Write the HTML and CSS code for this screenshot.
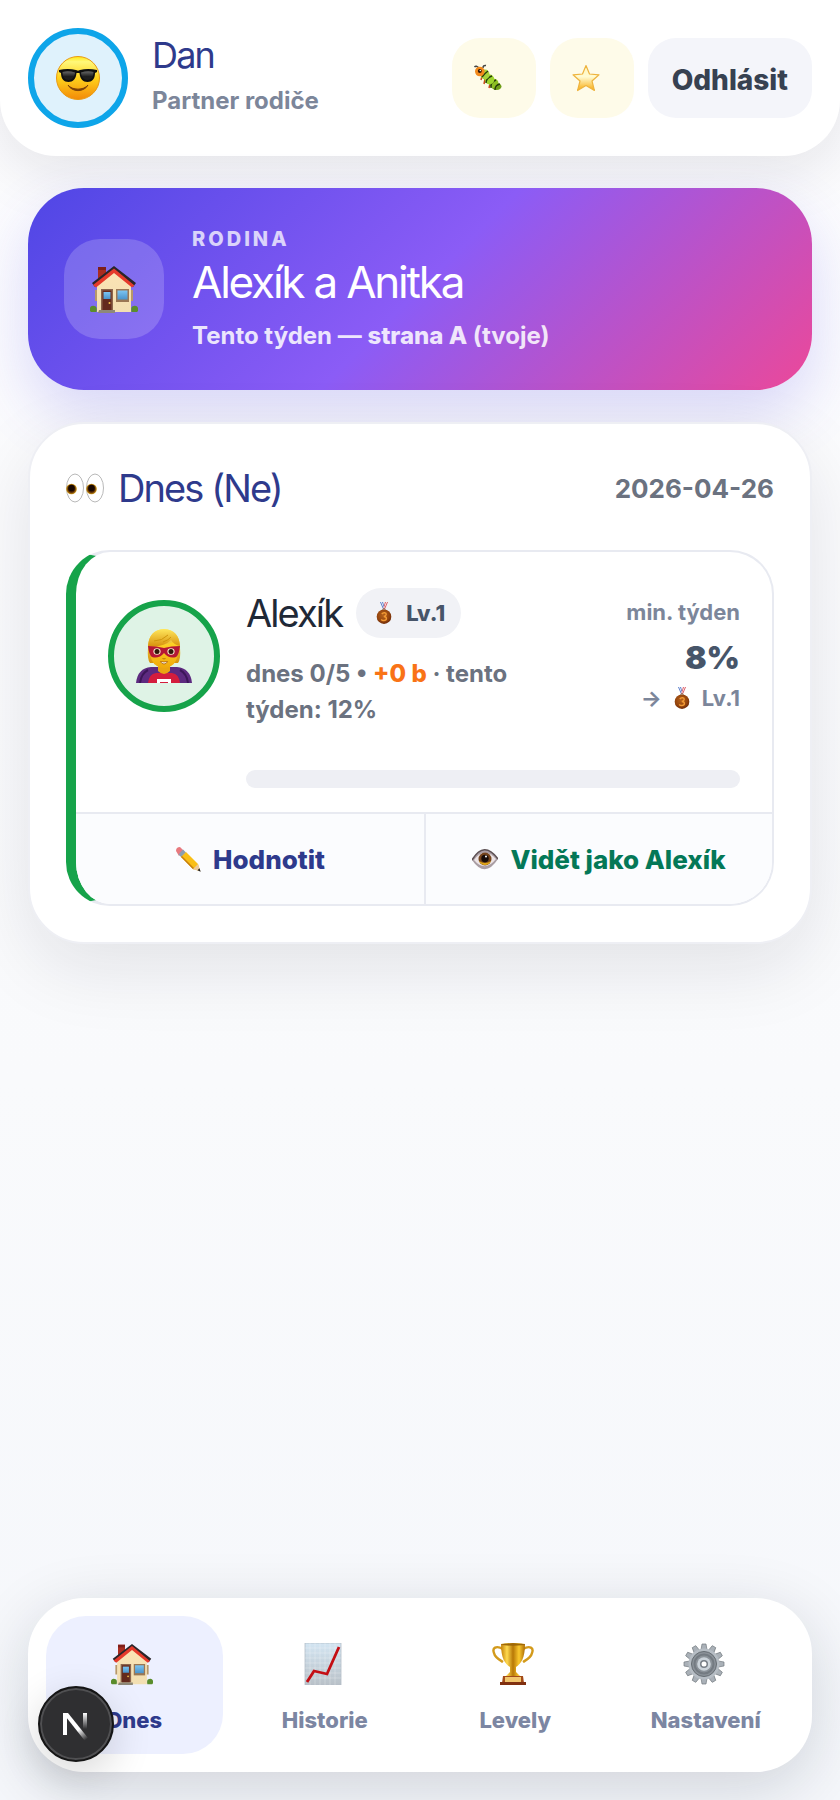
FILE: index.html
```html
<!DOCTYPE html>
<html lang="cs">
<head>
    <meta charset="UTF-8">
    <meta name="viewport" content="width=device-width, initial-scale=1.0">
    <title>Alexík a Anitka</title>
    <link rel="stylesheet" href="styles.css">
</head>
<body>
    <!-- shared icons -->
    <svg class="sprite" aria-hidden="true">
        <defs>
            <linearGradient id="g-wall" x1="0" y1="0" x2="0" y2="1"><stop offset="0" stop-color="#fbe3b4"/><stop offset="1" stop-color="#f2dfb2"/></linearGradient>
            <linearGradient id="g-glass" x1="0" y1="0" x2="0" y2="1"><stop offset="0" stop-color="#7cc5f2"/><stop offset="1" stop-color="#4a93cb"/></linearGradient>
            <radialGradient id="g-bronze" cx=".45" cy=".4" r=".6"><stop offset="0" stop-color="#b5621c"/><stop offset=".7" stop-color="#94440d"/><stop offset="1" stop-color="#6f2b08"/></radialGradient>
            <symbol id="i-house" viewBox="0 0 48 48">
                <path d="M8 2h8v14H8z" fill="#a92c20"/><path d="M8 2h8v3H8z" fill="#7e1f1a"/>
                <path d="M7 20 24 6l17 14v27H7z" fill="url(#g-wall)"/>
                <path d="M5 25h2v11H5zM41 25h2v11h-2z" fill="#b7986a"/>
                <path d="M24 1 2 18l3 4L24 6l19 16 3-4z" fill="#2a2529"/>
                <path d="M24 3.500 3 20l3 2.500L24 8l18 14.500 2.500-2z" fill="#e53a2b"/>
                <path d="M11 24h12v21H11z" fill="#8b654c"/><path d="M12.500 25.500h9V45h-9z" fill="#642a1d"/>
                <path d="M13.500 27h7v7h-7z" fill="url(#g-glass)"/><circle cx="19.500" cy="38" r="1" fill="#f4c54d"/>
                <path d="M26 24h13v13H26z" fill="#9a7754"/><path d="M27.500 25.500h10v9h-10z" fill="url(#g-glass)"/>
                <path d="M0 46c-1-4 2-6 4-5 3 0 3 3 2.500 6H1zM48 46c1-4-2-6-4-5-3 0-3 3-2.500 6h5.500z" fill="#5a8d2c"/>
                <path d="M9 45h16v3H8z" fill="#8e8878"/>
            </symbol>
            <symbol id="i-medal" viewBox="0 0 16 22">
                <path d="M4 0h3l2 7H7z" fill="#5579c9"/><path d="M12 0H9L7 7h2z" fill="#d95762"/>
                <path d="M5 0h1l2 6h-.5zM11 0h-1L8 6h.5z" fill="#fff"/>
                <circle cx="8" cy="8" r="1.300" fill="none" stroke="#8c7b6e"/>
                <circle cx="8" cy="14.700" r="7.300" fill="url(#g-bronze)"/>
                <path d="M5.800 12q1-1.400 2.800-1.200c2.300.300 2.300 3-.8 3.700 3.600.2 3.400 4-.1 4-1.100 0-2-.500-2.400-1.200" fill="none" stroke="#f29a35" stroke-width="1.400"/>
            </symbol>
        </defs>
    </svg>

    <header class="topbar">
        <div class="avatar avatar-me">
            <svg class="face" viewBox="0 0 44 44" aria-hidden="true">
                <defs><linearGradient id="g-face" x1="0" y1="0" x2="0" y2="1"><stop offset="0" stop-color="#ffe80f"/><stop offset=".12" stop-color="#fff87a"/><stop offset=".5" stop-color="#ffd21c"/><stop offset="1" stop-color="#f38a08"/></linearGradient>
                <linearGradient id="g-lens" x1="0" y1="0" x2="0" y2="1"><stop offset="0" stop-color="#666"/><stop offset=".6" stop-color="#1d1d1d"/></linearGradient></defs>
                <circle cx="22" cy="22" r="21.500" fill="url(#g-face)" stroke="#e99a13"/>
                <path d="M3 14q9-2 17 0l2 .8 2-.8q8-2 17 0v2l-2 1c0 6-3 9-7.500 9S24 23 23.500 17h-3C20 23 17 26 12.500 26S5 23 5 17l-2-1z" fill="#101010"/>
                <path d="M6.500 16q6-1.500 12.500.5c0 4-3 7.500-6.500 7.500s-6-3-6-8zM37.500 16q-6-1.500-12.500.5c0 4 3 7.500 6.500 7.500s6-3 6-8z" fill="url(#g-lens)"/>
                <path d="M12 29c4 5.500 16 5.500 20 0-4 7.500-16 7.500-20 0z" fill="#7c4108" stroke="#7c4108" stroke-linejoin="round"/>
            </svg>
        </div>
        <div class="user">
            <h1>Dan</h1>
            <p>Partner rodiče</p>
        </div>
        <div class="topbar-actions">
            <button class="icon-btn" type="button" aria-label="Housenka">
                <svg viewBox="0 0 28 28" aria-hidden="true">
                    <path d="M5 4Q2 1 .5 3M9 4q0-3 3-2.500" fill="none" stroke="#444" stroke-width="1.500"/>
                    <path d="M8 12l-1 4M11 15l-1 5M16 20l-1 4" stroke="#c8471b" stroke-width="1.500"/>
                    <ellipse cx="22.500" cy="22.500" rx="5" ry="3.500" fill="#6f9e18"/><ellipse cx="20" cy="19.500" rx="4.500" ry="4.800" fill="#8cbf24"/>
                    <path d="M17 24q-1-6 5-8M21 26q0-5 5-6" fill="none" stroke="#263a0c" stroke-width="1.400"/>
                    <ellipse cx="15.500" cy="15.500" rx="4.800" ry="5" fill="#9ed42f"/><path d="M12 19q0-5 6-7" fill="none" stroke="#263a0c" stroke-width="1.400"/>
                    <ellipse cx="11" cy="10.500" rx="4.500" ry="5" fill="#a4d43a"/><path d="M8 13q2-3 6-6" fill="none" stroke="#263a0c" stroke-width="1.400"/>
                    <circle cx="5.800" cy="7.500" r="4.800" fill="#f38a1c"/><circle cx="5.800" cy="7" r="2" fill="#301707"/><circle cx="6.300" cy="6.500" r=".7" fill="#fff"/>
                </svg>
            </button>
            <button class="icon-btn" type="button" aria-label="Hvězda">
                <svg viewBox="0 0 28 28" aria-hidden="true">
                    <defs><linearGradient id="g-star" x1="0" y1="0" x2="0" y2="1"><stop offset="0" stop-color="#fff6bd"/><stop offset=".45" stop-color="#fffbd2"/><stop offset="1" stop-color="#f9ac10"/></linearGradient></defs>
                    <path d="M14 1.500l3.500 8.500 9.500.8-7 6.200 2.400 9.500L14 21.500 5.600 26.500 8 17 1 10.800l9.500-.8z" fill="url(#g-star)" stroke="#eeb33e" stroke-width="1.200" stroke-linejoin="round"/>
                </svg>
            </button>
            <button class="logout" type="button">Odhlásit</button>
        </div>
    </header>

    <main class="content">
        <section class="family">
            <div class="family-icon"><svg aria-hidden="true"><use href="#i-house"/></svg></div>
            <div class="family-text">
                <p class="eyebrow">RODINA</p>
                <h2>Alexík a Anitka</h2>
                <p class="family-week">Tento týden — <strong>strana A</strong> (tvoje)</p>
            </div>
        </section>

        <section class="card">
            <div class="card-head">
                <svg class="eyes" viewBox="0 0 38 30" aria-hidden="true">
                    <defs><radialGradient id="g-iris"><stop offset="0" stop-color="#1c0900"/><stop offset=".6" stop-color="#522503"/><stop offset="1" stop-color="#d39a16"/></radialGradient></defs>
                    <ellipse cx="9" cy="15" rx="8.500" ry="14" fill="#fff" stroke="#b9b9b9"/><ellipse cx="29" cy="15" rx="8.500" ry="14" fill="#fff" stroke="#b9b9b9"/>
                    <circle cx="5.500" cy="16" r="5.300" fill="url(#g-iris)"/><circle cx="25.500" cy="16" r="5.300" fill="url(#g-iris)"/>
                    <circle cx="5.500" cy="15" r="3.200" fill="#190800"/><circle cx="25.500" cy="15" r="3.200" fill="#190800"/>
                </svg>
                <h2>Dnes (Ne)</h2>
                <time datetime="2026-04-26">2026-04-26</time>
            </div>

            <article class="child">
                <div class="child-body">
                    <div class="avatar avatar-child">
                        <svg class="hero" viewBox="0 0 56 54" aria-hidden="true">
                            <defs><linearGradient id="g-skin" x1="0" y1="0" x2="0" y2="1"><stop offset="0" stop-color="#ffd72a"/><stop offset="1" stop-color="#f0a90a"/></linearGradient>
                            <linearGradient id="g-hair" x1="0" y1="0" x2="0" y2="1"><stop offset="0" stop-color="#ffe75c"/><stop offset="1" stop-color="#d8920d"/></linearGradient></defs>
                            <path d="M0 54c1-10 6-15 15-16h26c9 1 14 6 15 16z" fill="#5d2a80"/>
                            <path d="M4 54c1-7 4-11 8-13M52 54c-1-7-4-11-8-13" stroke="#3c1659" stroke-width="2" fill="none"/>
                            <path d="M12 54q1-9 8-10h16q7 1 8 10z" fill="#d41d3d"/>
                            <path d="M21 54v-4h14v4h-3v-1h-8v1z" fill="#fff"/>
                            <path d="M22 34h12v8q-6 6-12 0z" fill="#eaa511"/>
                            <path d="M14 34q-3-4-2-15Q12 1 28 0q16 1 16 19 1 11-2 15h-4V20H18v14z" fill="url(#g-hair)"/>
                            <path d="M14 15q14 3 28-4v11q0 11-7 15-7 4-14 0-7-4-7-15z" fill="url(#g-skin)"/>
                            <path d="M12 17Q13 1 28 0q15 1 16 17-6-1-9-6-8 8-23 6z" fill="url(#g-hair)"/>
                            <path d="M18 12q8 0 14-6M27 13q6-2 8-5" stroke="#cf960d" fill="none"/>
                            <path d="M12 17q9 0 16 2 7-2 16-2-1 9-4 11-7 2-12-4-5 6-12 4-3-2-4-11z" fill="#b51735"/>
                            <ellipse cx="21" cy="22.500" rx="3.600" ry="3.200" fill="#f6edcf"/><ellipse cx="35" cy="22.500" rx="3.600" ry="3.200" fill="#f6edcf"/>
                            <circle cx="21" cy="22.500" r="2.500" fill="#321709"/><circle cx="35" cy="22.500" r="2.500" fill="#321709"/>
                            <path d="M26.500 29.500q1.500.8 3 0" stroke="#b87407" fill="none"/><path d="M24.500 32.500q3.500 1 7 0-1 2.500-3.500 2.500t-3.500-2.500z" fill="#fff" stroke="#a96009" stroke-width=".8"/>
                        </svg>
                    </div>
                    <div class="child-main">
                        <div class="child-info">
                            <div class="child-text">
                                <div class="child-name">
                                    <h3>Alexík</h3>
                                    <span class="level"><svg class="medal" aria-hidden="true"><use href="#i-medal"/></svg>Lv.1</span>
                                </div>
                                <p class="child-stats">dnes 0/5 • <strong>+0 b</strong> · tento týden: 12%</p>
                            </div>
                            <div class="child-score">
                                <p>min. týden</p>
                                <p class="percent">8%</p>
                                <p class="next-level"><span>→</span><svg class="medal" aria-hidden="true"><use href="#i-medal"/></svg><span>Lv.1</span></p>
                            </div>
                        </div>
                        <div class="progress" role="progressbar" aria-label="Dnes" aria-valuenow="0" aria-valuemin="0" aria-valuemax="100"></div>
                    </div>
                </div>
                <div class="child-actions">
                    <button class="rate" type="button">
                        <svg viewBox="0 0 26 26" aria-hidden="true">
                            <path d="M1 5Q1 1 5 1l4 4-5 5z" fill="#e8797e"/><path d="M3.500 8.500 8 3.500l3 3-4.500 5z" fill="#8b9eb1"/>
                            <path d="M6 11l5-5 12 12 2 7-7-2z" fill="#f9bf17"/><path d="M7.500 12.500 6 11l1-1 13 13-2 .3z" fill="#c77f0e"/><path d="M18 23l5-5 2.500 7.500z" fill="#ecc99a"/><path d="M22.500 24.300l2-2 1.200 3.400z" fill="#222"/>
                        </svg>
                        Hodnotit
                    </button>
                    <button class="view-as" type="button">
                        <svg viewBox="0 0 26 26" aria-hidden="true">
                            <path d="M0 14Q12-6 26 13 13 33 0 14z" fill="#a99da3"/><path d="M0 14Q12-6 26 13" fill="none" stroke="#5d5154" stroke-width="1.500"/>
                            <path d="M2 14Q12 0 24 13 13 27 2 14z" fill="#ece4e6"/>
                            <circle cx="13" cy="13" r="6.500" fill="#74441c"/><path d="M7 15a6.500 6.500 0 0 0 12 0q-6 4-12 0z" fill="#dfa618"/><circle cx="13" cy="12.500" r="3.700" fill="#160c08"/><circle cx="14" cy="10.500" r="1" fill="#fff"/>
                        </svg>
                        Vidět jako Alexík
                    </button>
                </div>
            </article>
        </section>
    </main>

    <nav class="tabs">
        <a class="tab active" href="#dnes">
            <svg aria-hidden="true"><use href="#i-house"/></svg>
            Dnes
        </a>
        <a class="tab" href="#historie">
            <svg viewBox="0 0 42 42" aria-hidden="true">
                <defs><linearGradient id="g-chart" x1="0" y1="0" x2="0" y2="1"><stop offset="0" stop-color="#d3e5f2"/><stop offset="1" stop-color="#b9c1c8"/></linearGradient></defs>
                <path d="M3 0h36v42H3z" fill="url(#g-chart)" stroke="#b3bdc6" stroke-width=".8"/>
                <path d="M8 0v42M13 0v42M18 0v42M23 0v42M28 0v42M33 0v42M3 5h36M3 10h36M3 15h36M3 20h36M3 25h36M3 30h36M3 35h36" stroke="#fff" stroke-opacity=".25"/>
                <path d="M5 39l7-11 13 3L37 4" fill="none" stroke="#c40e14" stroke-width="2.800"/>
            </svg>
            Historie
        </a>
        <a class="tab" href="#levely">
            <svg viewBox="0 0 42 42" aria-hidden="true">
                <defs><linearGradient id="g-cup"><stop offset="0" stop-color="#c48008"/><stop offset=".25" stop-color="#ffda50"/><stop offset=".5" stop-color="#b87806"/><stop offset=".75" stop-color="#fbc92e"/><stop offset="1" stop-color="#ac6b05"/></linearGradient></defs>
                <path d="M11 6C4 2 0 5 2 10c1 5 6 7 9 9M31 6c7-4 11-1 9 4-1 5-6 7-9 9" fill="none" stroke="#d39a1b" stroke-width="2.400"/>
                <path d="M9 1q12-2 24 0c0 14-4 20-9 23v5l4 4H14l4-4v-5C13 21 9 15 9 1z" fill="url(#g-cup)"/><ellipse cx="21" cy="1.500" rx="12" ry="1.200" fill="#9e6807"/>
                <path d="M11 33h20l1 7H10z" fill="#a34b18"/><path d="M8 39h26v3H8z" fill="#803010"/><path d="M13 34h16v5H13z" fill="#f1c66d"/>
            </svg>
            Levely
        </a>
        <a class="tab" href="#nastaveni">
            <svg viewBox="-21 -21 42 42" aria-hidden="true">
                <g fill="#aab1b8" stroke="#737a80" stroke-width=".7">
                    <g id="teeth"><path id="tooth" d="M-3-14l1-6h4l1 6zM-3 14l1 6h4l1-6z"/><use href="#tooth" transform="rotate(30)"/><use href="#tooth" transform="rotate(60)"/></g>
                    <use href="#teeth" transform="rotate(90)"/>
                </g>
                <circle r="15.500" fill="#b6bdc4"/><circle r="12.500" fill="#8b9299" stroke="#666d73"/><circle r="9.500" fill="none" stroke="#747b82" stroke-width="2"/>
                <circle r="6.800" fill="#cbd3da"/><circle r="4" fill="#777e86"/><circle r="2.500" fill="#fff"/>
            </svg>
            Nastavení
        </a>
    </nav>

    <button class="dev-badge" type="button" aria-label="Nástroje">
        <svg viewBox="0 0 40 40" aria-hidden="true">
            <defs><linearGradient id="g-diag" gradientUnits="userSpaceOnUse" x1="22" y1="22" x2="31" y2="35"><stop offset=".2" stop-color="#fff"/><stop offset="1" stop-color="#fff" stop-opacity="0"/></linearGradient>
            <linearGradient id="g-stem" gradientUnits="userSpaceOnUse" x1="0" y1="9" x2="0" y2="25"><stop offset="0" stop-color="#fff"/><stop offset="1" stop-color="#fff" stop-opacity="0"/></linearGradient></defs>
            <path d="M7 9h5l20 25-3 3L10 13z" fill="url(#g-diag)"/>
            <path d="M7 9h4v22H7z" fill="#fff"/><path d="M27 9h4v16h-4z" fill="url(#g-stem)"/>
        </svg>
    </button>
</body>
</html>
```
FILE: styles.css
```css
* {
    box-sizing: border-box;
}
body {
    font-family: Inter, "Liberation Sans", sans-serif;
    margin: 0;
    min-height: 100vh;
    display: flex;
    flex-direction: column;
    background: linear-gradient(180deg, #fcfcfe 0%, #f9fafc 60%, #f5f7fb 100%);
    color: #1f2937;
    overflow-x: hidden;
}
h1, h2, h3, p {
    margin: 0;
}
h1, h2, h3 {
    font-weight: 400;
    letter-spacing: -0.05em;
}
button {
    font-family: inherit;
    border: none;
    cursor: pointer;
}
svg {
    display: block;
    flex-shrink: 0;
}
.sprite {
    position: absolute;
    width: 0;
    height: 0;
}

/* top bar */
.topbar {
    display: flex;
    align-items: center;
    padding: 28px;
    background: #fff;
    border-radius: 0 0 56px 56px;
    box-shadow: 0 16px 60px rgba(15, 23, 42, 0.1);
}
.avatar {
    display: flex;
    align-items: center;
    justify-content: center;
    flex-shrink: 0;
    border-radius: 50%;
}
.avatar-me {
    width: 100px;
    height: 100px;
    border: 6px solid #0ea5e9;
    background: #dff2fc;
}
.face {
    width: 44px;
    height: 44px;
}
.user {
    flex: 1;
    margin-left: 24px;
    padding-bottom: 6px;
}
.user h1 {
    font-size: 36px;
    line-height: 44px;
    color: #2e3a8c;
}
.user p {
    margin-top: 8px;
    font-size: 24px;
    line-height: 32px;
    font-weight: 700;
    color: #7c869a;
}
.topbar-actions {
    display: flex;
    gap: 14px;
}
.icon-btn {
    width: 84px;
    height: 80px;
    padding: 0 34px 0 22px;
    border-radius: 28px;
    background: #fefbe9;
}
.icon-btn svg {
    width: 28px;
    height: 28px;
}
.logout {
    height: 80px;
    padding: 4px 24px 0;
    border-radius: 28px;
    background: #f4f5fa;
    font-size: 28px;
    font-weight: 800;
    color: #374151;
}

.content {
    display: flex;
    flex-direction: column;
    gap: 32px;
    padding: 32px 28px;
}

/* family banner */
.family {
    display: flex;
    align-items: center;
    gap: 28px;
    padding: 36px;
    border-radius: 56px;
    background: linear-gradient(135deg, #4f46e5 0%, #8b5cf6 50%, #ec4899 100%);
    box-shadow: 0 24px 60px rgba(79, 70, 229, 0.2);
    color: #fff;
}
.family-icon {
    display: flex;
    align-items: center;
    justify-content: center;
    width: 100px;
    height: 100px;
    border-radius: 36px;
    background: rgba(255, 255, 255, 0.18);
}
.family-icon svg {
    width: 48px;
    height: 48px;
}
.eyebrow {
    font-size: 20px;
    line-height: 30px;
    font-weight: 800;
    letter-spacing: 3px;
    opacity: 0.75;
}
.family h2 {
    font-size: 44px;
    line-height: 56px;
}
.family-week {
    margin-top: 8px;
    font-size: 24px;
    line-height: 36px;
    font-weight: 700;
    opacity: 0.85;
}
.family-week strong {
    font-weight: 800;
}

/* today */
.card {
    padding: 32px 36px 36px;
    border: 2px solid #eeeff4;
    border-radius: 56px;
    background: #fff;
    box-shadow: 0 24px 72px rgba(15, 23, 42, 0.1);
}
.card-head {
    display: flex;
    align-items: center;
    gap: 14px;
    height: 64px;
    margin-bottom: 30px;
}
.card-head h2 {
    flex: 1;
    font-size: 38px;
    line-height: 48px;
    color: #2e3a8c;
}
.card-head time {
    font-size: 26px;
    font-weight: 700;
    color: #6b7280;
}
.eyes {
    width: 38px;
    height: 30px;
}
.child {
    border: 2px solid #e8eaf1;
    border-left: 10px solid #16a34a;
    border-radius: 44px;
    overflow: hidden;
}
.child-body {
    display: flex;
    gap: 26px;
    padding: 36px 32px 24px;
}
.avatar-child {
    width: 112px;
    height: 112px;
    margin-top: 12px;
    border: 6px solid #16a34a;
    background: #dff3e6;
}
.hero {
    width: 56px;
    height: 54px;
}
.child-main {
    flex: 1;
}
.child-info {
    display: flex;
    justify-content: space-between;
    gap: 24px;
    min-height: 146px;
}
.child-text {
    max-width: 290px;
}
.child-name {
    display: flex;
    align-items: center;
    gap: 14px;
}
.child-name h3 {
    font-size: 38px;
    line-height: 50px;
}
.level {
    display: flex;
    align-items: center;
    gap: 14px;
    height: 50px;
    padding: 0 16px 0 20px;
    border-radius: 25px;
    background: #f1f2f6;
    font-size: 22px;
    font-weight: 800;
    color: #475569;
}
.medal {
    width: 16px;
    height: 22px;
}
.child-stats {
    margin-top: 18px;
    font-size: 24px;
    line-height: 36px;
    font-weight: 700;
    color: #6b7280;
}
.child-stats strong {
    font-weight: 800;
    color: #f97316;
}
.child-score {
    padding-top: 7px;
    text-align: right;
    white-space: nowrap;
    font-size: 22px;
    line-height: 34px;
    font-weight: 700;
    color: #7c869a;
}
.child-score .percent {
    margin: 10px 0 4px;
    font-size: 32px;
    font-weight: 900;
    line-height: 38px;
    color: #475569;
}
.next-level {
    display: flex;
    align-items: center;
    justify-content: flex-end;
    gap: 12px;
}
.progress {
    height: 18px;
    margin-top: 36px;
    border-radius: 9px;
    background: #eeeff4;
}
.child-actions {
    display: grid;
    grid-template-columns: 1fr 1fr;
    border-top: 2px solid #e8eaf1;
}
.child-actions button {
    display: flex;
    align-items: center;
    justify-content: center;
    gap: 12px;
    height: 90px;
    padding: 0;
    background: #fbfcfe;
    font-size: 26px;
    font-weight: 800;
}
.child-actions svg {
    width: 26px;
    height: 26px;
}
.child-actions .rate {
    color: #2e3a8c;
}
.child-actions .view-as {
    border-left: 2px solid #e8eaf1;
    color: #047857;
}

/* bottom navigation */
.tabs {
    display: grid;
    grid-template-columns: repeat(4, 1fr);
    gap: 14px;
    margin: auto 28px 28px;
    padding: 18px;
    border-radius: 56px;
    background: #fff;
    box-shadow: 0 16px 64px rgba(15, 23, 42, 0.16);
}
.tab {
    display: flex;
    flex-direction: column;
    align-items: center;
    gap: 20px;
    height: 138px;
    padding-top: 27px;
    border-radius: 40px;
    font-size: 22px;
    line-height: 30px;
    font-weight: 800;
    color: #7c86a2;
    text-decoration: none;
}
.tab.active {
    background: #edf0ff;
    color: #2e3a8c;
}
.tab svg {
    width: 42px;
    height: 42px;
    margin-right: 4px;
}

.dev-badge {
    position: fixed;
    left: 38px;
    bottom: 38px;
    display: flex;
    align-items: center;
    justify-content: center;
    width: 76px;
    height: 76px;
    padding: 0;
    border: 2px solid #151515;
    border-radius: 50%;
    background: #2f2f31;
    box-shadow: inset 0 0 0 2px #505052, 0 12px 40px rgba(0, 0, 0, 0.16);
}
.dev-badge svg {
    width: 40px;
    height: 40px;
}
```
